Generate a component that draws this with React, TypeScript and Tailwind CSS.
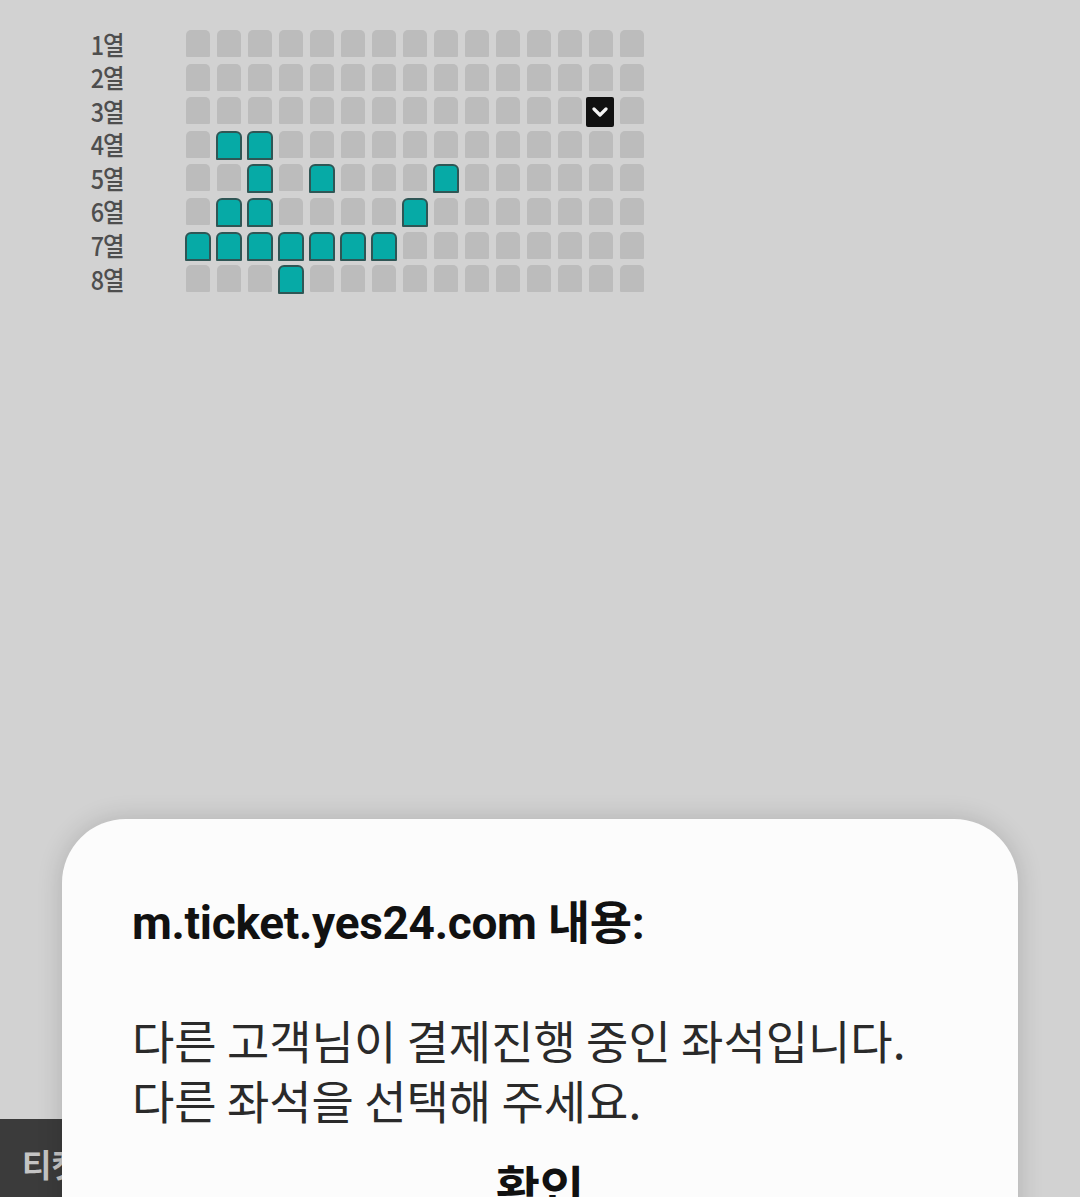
import React from 'react';

const COLS = 15;
const ROWS = 8;

// seats taken by other customers (row, col), 1-based
const taken: Record<number, number[]> = {
  4: [2, 3],
  5: [3, 5, 9],
  6: [2, 3, 8],
  7: [1, 2, 3, 4, 5, 6, 7],
  8: [4],
};

const picked = { row: 3, col: 14 };

const Seat: React.FC<{ row: number; col: number }> = ({ row, col }) => {
  if (row === picked.row && col === picked.col) {
    return (
      <div className="-ml-[3px] flex h-[30px] w-[28px] items-center justify-center rounded-[2px] bg-[#111]">
        <svg width="16" height="12" viewBox="0 0 16 12">
          <path d="M2 3 L8 9 L14 3" fill="none" stroke="#f4f4f4" strokeWidth="3.2" strokeLinecap="round" strokeLinejoin="round" />
        </svg>
      </div>
    );
  }
  if (taken[row]?.includes(col)) {
    return <div className="-ml-[1px] h-[29px] w-[26px] rounded-t-[6px] rounded-b-[1px] border-2 border-[#2f5655] bg-[#06aaa6]" />;
  }
  return <div className="h-[27px] w-[24px] rounded-t-[5px] rounded-b-[1px] bg-[#bcbcbc]" />;
};

const App: React.FC = () => {
  const rows = Array.from({ length: ROWS }, (_, i) => i + 1);
  const cols = Array.from({ length: COLS }, (_, i) => i + 1);

  return (
    <div className="relative h-[1197px] w-[1080px] overflow-hidden bg-[#d2d2d2] font-['Noto_Sans','Noto_Sans_CJK_KR',sans-serif]">
      {/* Seat map */}
      <div className="flex pt-[30px]">
        <div className="ml-[70px] flex w-[54px] flex-col gap-y-[6.6px]">
          {rows.map((r) => (
            <div key={r} className="flex h-[27px] items-center justify-end">
              <span className="origin-right scale-x-90 whitespace-nowrap text-[26px] font-medium leading-[26px] tracking-[-1px] text-[#4e4e4e] font-['Noto_Sans_CJK_KR',sans-serif]">
                {r}열
              </span>
            </div>
          ))}
        </div>
        <div className="ml-[62px] grid grid-cols-[repeat(15,24px)] grid-rows-[repeat(8,27px)] gap-x-[7px] gap-y-[6.6px]">
          {rows.map((r) =>
            cols.map((c) => (
              <div key={`${r}-${c}`} className="h-[27px] w-[24px] overflow-visible">
                <Seat row={r} col={c} />
              </div>
            ))
          )}
        </div>
      </div>

      {/* Bottom button behind the dialog */}
      <div className="absolute left-0 top-[1119px] bottom-0 w-[300px] bg-[#3b3b3b] pl-[22px] pt-[28px]">
        <span className="text-[32px] font-bold leading-none text-[#c4c4c4] font-['Noto_Sans_CJK_KR',sans-serif]">티켓</span>
      </div>

      {/* Alert dialog */}
      <div className="absolute left-[62px] top-[819px] h-[420px] w-[956px] rounded-t-[64px] bg-[#fcfcfc] pl-[70px] pr-[70px] pt-[74px] shadow-[0_0_26px_rgba(0,0,0,0.16)]">
        <div className="text-[46px] font-bold leading-[60px] tracking-[-0.3px] text-[#111] font-['Roboto','Noto_Sans_CJK_KR',sans-serif]">
          m.ticket.yes24.com 내용:
        </div>
        <div className="mt-[56px] text-[46px] leading-[60px] text-[#2a2a2a] font-['Noto_Sans_CJK_KR',sans-serif]">
          <div>다른 고객님이 결제진행 중인 좌석입니다.</div>
          <div>다른 좌석을 선택해 주세요.</div>
        </div>
        <div className="mt-[26px] -ml-[70px] -mr-[70px] text-center text-[48px] font-bold leading-[60px] text-[#111] font-['Noto_Sans_CJK_KR',sans-serif]">
          확인
        </div>
      </div>
    </div>
  );
};

export default App;
